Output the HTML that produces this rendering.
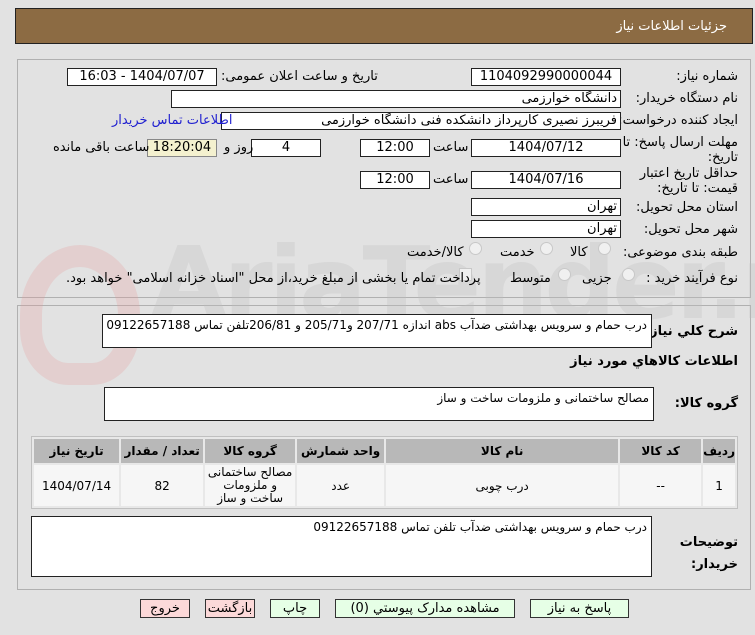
<!DOCTYPE html>
<html><head><meta charset="utf-8"><style>
*{box-sizing:border-box;margin:0;padding:0}
body{width:755px;height:635px;background:#e2e2e2;font-family:"DejaVu Sans","Liberation Sans",sans-serif;font-size:12px;color:#000;position:relative;overflow:hidden;direction:rtl}
.a{position:absolute}
.hdr{left:15px;top:8px;width:738px;height:36px;background:#8c6b43;border:1px solid #222}
.hdr span{position:absolute;right:25px;top:10px;color:#fff;font-size:13px}
.panel{left:17px;width:734px;border:1px solid #b0b0b0}
.in{position:absolute;background:#fff;border:1px solid #222;height:18px;line-height:16px;padding:0 3px;font-size:13px;white-space:nowrap;overflow:hidden}
.c{text-align:center}
.lb{position:absolute;font-size:13px;white-space:nowrap}
.b{font-weight:bold}
.rad{position:absolute;width:13px;height:13px;border-radius:50%;border:1px solid #c8c8c8;background:#f0f0f0}
.ta{position:absolute;background:#fff;border:1px solid #222;font-size:12px;padding:3px 4px}
table{position:absolute;left:31px;top:436px;width:707px;border-collapse:separate;border-spacing:2px;background:#e8e8e8;border:1px solid #c0c0c0}
th{background:#b8b8b8;height:24px;font-size:12px;font-weight:bold}
td{background:#f6f6f6;text-align:center;font-size:12px;height:41px}
.btn{position:absolute;top:599px;height:19px;border:1px solid #333;background:#e6ffe6;font-size:13px;text-align:center;line-height:17px}
.red{background:#fcd9d9}
</style></head><body>
<div class="a hdr"><span>جزئیات اطلاعات نیاز</span></div>
<div class="a panel" style="top:59px;height:239px"></div>
<div class="a panel" style="top:305px;height:285px"></div>
<div class="a" style="left:150px;top:225px;font-size:100px;color:rgba(190,190,190,0.3);font-weight:bold;direction:ltr;white-space:nowrap;letter-spacing:-4px">AriaTender.net</div>
<div class="a" style="left:20px;top:245px;width:120px;height:140px;border:22px solid rgba(230,150,150,0.25);border-radius:50% 50% 40% 40%"></div>

<div class="lb" style="right:17px;top:69px">شماره نیاز:</div>
<div class="in c" style="left:471px;top:68px;width:150px">1104092990000044</div>
<div class="lb" style="left:221px;top:69px">تاریخ و ساعت اعلان عمومی:</div>
<div class="in c" style="left:67px;top:68px;width:150px">1404/07/07 - 16:03</div>

<div class="lb" style="right:17px;top:91px">نام دستگاه خریدار:</div>
<div class="in" style="left:171px;top:90px;width:450px">دانشگاه خوارزمی</div>

<div class="lb" style="right:17px;top:113px">ایجاد کننده درخواست:</div>
<div class="in" style="left:221px;top:112px;width:400px">فریبرز نصیری کارپرداز دانشکده فنی دانشگاه خوارزمی</div>
<div class="lb" style="left:112px;top:113px;color:#2020d0">اطلاعات تماس خریدار</div>

<div class="lb" style="right:17px;top:135px;line-height:15px;text-align:right">مهلت ارسال پاسخ: تا<br>تاریخ:</div>
<div class="in c" style="left:471px;top:139px;width:150px">1404/07/12</div>
<div class="lb" style="left:433px;top:140px">ساعت</div>
<div class="in c" style="left:360px;top:139px;width:70px">12:00</div>
<div class="in c" style="left:251px;top:139px;width:70px">4</div>
<div class="lb" style="left:224px;top:140px">روز و</div>
<div class="in c" style="left:147px;top:139px;width:70px;background:#f4f1cf;border-color:#888">18:20:04</div>
<div class="lb" style="left:53px;top:140px">ساعت باقی مانده</div>

<div class="lb" style="right:17px;top:166px;line-height:15px;text-align:right">حداقل تاریخ اعتبار<br>قیمت: تا تاریخ:</div>
<div class="in c" style="left:471px;top:171px;width:150px">1404/07/16</div>
<div class="lb" style="left:433px;top:172px">ساعت</div>
<div class="in c" style="left:360px;top:171px;width:70px">12:00</div>

<div class="lb" style="right:17px;top:200px">استان محل تحویل:</div>
<div class="in" style="left:471px;top:198px;width:150px">تهران</div>
<div class="lb" style="right:17px;top:222px">شهر محل تحویل:</div>
<div class="in" style="left:471px;top:220px;width:150px">تهران</div>

<div class="lb" style="right:17px;top:245px">طبقه بندی موضوعی:</div>
<div class="rad" style="left:598px;top:242px"></div><div class="lb" style="left:570px;top:245px">کالا</div>
<div class="rad" style="left:540px;top:242px"></div><div class="lb" style="left:500px;top:245px">خدمت</div>
<div class="rad" style="left:469px;top:242px"></div><div class="lb" style="left:407px;top:245px">کالا/خدمت</div>

<div class="lb" style="right:17px;top:271px">نوع فرآیند خرید :</div>
<div class="rad" style="left:622px;top:268px"></div><div class="lb" style="left:582px;top:271px">جزیی</div>
<div class="rad" style="left:558px;top:268px"></div><div class="lb" style="left:510px;top:271px">متوسط</div>
<div class="a" style="left:459px;top:268px;width:13px;height:13px;border:1px solid #c8c8c8;background:#f0f0f0"></div>
<div class="lb" style="left:66px;top:271px">پرداخت تمام یا بخشی از مبلغ خرید،از محل "اسناد خزانه اسلامی" خواهد بود.</div>

<div class="lb b" style="right:17px;top:324px">شرح کلي نياز:</div>
<div class="ta" style="left:102px;top:314px;width:550px;height:34px;white-space:nowrap;overflow:hidden">درب حمام و سرویس بهداشتی ضدآب  abs اندازه 207/71 و205/71 و 206/81تلفن تماس 09122657188</div>
<div class="lb b" style="right:17px;top:354px">اطلاعات کالاهاي مورد نياز</div>

<div class="lb b" style="right:17px;top:396px">گروه کالا:</div>
<div class="ta" style="left:104px;top:387px;width:550px;height:34px">مصالح ساختمانی و ملزومات ساخت و ساز</div>

<table>
<tr><th style="width:28px">ردیف</th><th style="width:81px">کد کالا</th><th style="width:232px">نام کالا</th><th style="width:87px">واحد شمارش</th><th style="width:90px">گروه کالا</th><th style="width:82px">تعداد / مقدار</th><th>تاریخ نیاز</th></tr>
<tr><td>1</td><td>--</td><td>درب چوبی</td><td>عدد</td><td style="line-height:13px">مصالح ساختمانی و ملزومات ساخت و ساز</td><td>82</td><td>1404/07/14</td></tr>
</table>

<div class="lb b" style="right:17px;top:532px;line-height:22px">توضیحات<br>خریدار:</div>
<div class="ta" style="left:31px;top:516px;width:621px;height:61px">درب حمام و سرویس بهداشتی ضدآب تلفن تماس 09122657188</div>

<div class="btn" style="left:530px;width:99px">پاسخ به نیاز</div>
<div class="btn" style="left:335px;width:180px">مشاهده مدارک پیوستي (0)</div>
<div class="btn" style="left:270px;width:50px">چاپ</div>
<div class="btn red" style="left:205px;width:50px">بازگشت</div>
<div class="btn red" style="left:140px;width:50px">خروج</div>
</body></html>
